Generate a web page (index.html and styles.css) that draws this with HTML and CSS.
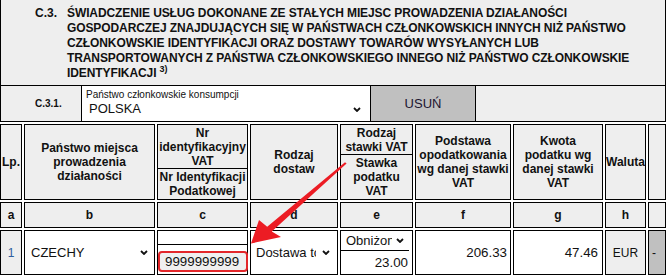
FILE: index.html
```html
<!DOCTYPE html>
<html lang="pl">
<head>
<meta charset="utf-8">
<title>C.3.</title>
<link rel="stylesheet" href="styles.css">
</head>
<body>
<div class="page">
  <div class="section-head">
    <div class="sec-num">C.3.</div>
    <div class="sec-title">
      <div class="tl">ŚWIADCZENIE USŁUG DOKONANE ZE STAŁYCH MIEJSC PROWADZENIA DZIAŁANOŚCI</div>
      <div class="tl">GOSPODARCZEJ ZNAJDUJĄCYCH SIĘ W PAŃSTWACH CZŁONKOWSKICH INNYCH NIŻ PAŃSTWO</div>
      <div class="tl">CZŁONKOWSKIE IDENTYFIKACJI ORAZ DOSTAWY TOWARÓW WYSYŁANYCH LUB</div>
      <div class="tl">TRANSPORTOWANYCH Z PAŃSTWA CZŁONKOWSKIEGO INNEGO NIŻ PAŃSTWO CZŁONKOWSKIE</div>
      <div class="tl">IDENTYFIKACJI <sup class="fn">3)</sup></div>
    </div>
  </div>

  <div class="country-row">
    <div class="country-num">C.3.1.</div>
    <div class="country-field">
      <div class="field-label">Państwo członkowskie konsumpcji</div>
      <div class="select-big">
        <span>POLSKA</span>
        <svg class="chev" width="8" height="5" viewBox="0 0 8 5"><path d="M1 1 L4 4 L7 1" fill="none" stroke="#111" stroke-width="1.8"/></svg>
      </div>
    </div>
    <div class="btn-remove">USUŃ</div>
    <div class="country-rest"></div>
  </div>

  <div class="grid">
    <div class="cell th">Lp.</div>
    <div class="cell th">Państwo miejsca<br>prowadzenia<br>działaności</div>
    <div class="cell th th-split">
      <div class="split-top split-top-c">Nr<br>identyfikacyjny<br>VAT</div>
      <div class="split-bottom">Nr Identyfikacji<br>Podatkowej</div>
    </div>
    <div class="cell th">Rodzaj<br>dostaw</div>
    <div class="cell th th-split">
      <div class="split-top split-top-e">Rodzaj<br>stawki VAT</div>
      <div class="split-bottom">Stawka<br>podatku<br>VAT</div>
    </div>
    <div class="cell th">Podstawa<br>opodatkowania<br>wg danej stawki<br>VAT</div>
    <div class="cell th">Kwota<br>podatku wg<br>danej stawki<br>VAT</div>
    <div class="cell th">Waluta</div>
    <div class="cell th"></div>

    <div class="cell th">a</div>
    <div class="cell th">b</div>
    <div class="cell th">c</div>
    <div class="cell th">d</div>
    <div class="cell th">e</div>
    <div class="cell th">f</div>
    <div class="cell th">g</div>
    <div class="cell th">h</div>
    <div class="cell th"></div>

    <div class="cell td-lp">1</div>
    <div class="cell td td-select">
      <span class="sel-text">CZECHY</span>
      <svg class="chev" width="8" height="5" viewBox="0 0 8 5"><path d="M1 1 L4 4 L7 1" fill="none" stroke="#111" stroke-width="1.8"/></svg>
    </div>
    <div class="cell td td-nip">
      <div class="nip-top"></div>
      <div class="nip-bottom"><div class="hl-input">9999999999</div></div>
    </div>
    <div class="cell td td-kind">
      <span class="sel-clip sel-clip-d">Dostawa towarów</span>
      <svg class="chev" width="8" height="5" viewBox="0 0 8 5"><path d="M1 1 L4 4 L7 1" fill="none" stroke="#111" stroke-width="1.8"/></svg>
    </div>
    <div class="cell td td-rate">
      <div class="rate-top">
        <span class="sel-clip sel-clip-e">Obniżona</span>
        <svg class="chev" width="8" height="5" viewBox="0 0 8 5"><path d="M1 1 L4 4 L7 1" fill="none" stroke="#111" stroke-width="1.8"/></svg>
      </div>
      <div class="rate-bottom">23.00</div>
    </div>
    <div class="cell td td-num td-num-f">206.33</div>
    <div class="cell td td-num">47.46</div>
    <div class="cell td-cur">EUR</div>
    <div class="cell td-del">-</div>
  </div>

  <svg class="arrow" width="666" height="275" viewBox="0 0 666 275">
    <polygon points="345,162.3 267.2,226.8 259,220 251,243.5 281,237 271.8,231.4 346.6,163.6" fill="#ec1c24"/>
  </svg>
</div>
</body>
</html>
```
FILE: styles.css
```css
* {
  box-sizing: border-box;
}

html,
body {
  margin: 0;
  padding: 0;
  background: #fff;
}

body {
  font-family: "Liberation Sans", Arial, sans-serif;
  color: #111;
}

.page {
  position: relative;
  width: 666px;
  height: 275px;
  overflow: hidden;
}

/* ---------- section header ---------- */
.section-head {
  display: flex;
  height: 86px;
  padding-top: 6px;
  background: #eee;
  border-left: 1px solid #000;
  border-right: 1px solid #000;
  border-bottom: 1px solid #000;
  font-size: 12px;
  font-weight: bold;
  line-height: 15px;
}

.sec-num {
  width: 66px;
  padding-left: 34px;
  white-space: nowrap;
}

.sec-title {
  letter-spacing: -0.1px;
}

.tl {
  height: 15px;
  white-space: nowrap;
}

.fn {
  font-size: 9px;
  line-height: 0;
  vertical-align: 5px;
}

/* ---------- country row ---------- */
.country-row {
  display: flex;
  height: 36px;
  border-left: 1px solid #000;
  border-right: 1px solid #000;
  border-bottom: 1px solid #000;
}

.country-num {
  display: flex;
  align-items: center;
  width: 81px;
  padding-left: 34px;
  background: #eee;
  border-right: 1px solid #000;
  font-size: 10px;
  font-weight: bold;
}

.country-field {
  width: 288px;
  padding: 3px 0 0 4px;
  background: #fff;
}

.field-label {
  font-size: 10px;
  line-height: 12px;
  white-space: nowrap;
}

.select-big {
  display: flex;
  align-items: center;
  justify-content: space-between;
  width: 275px;
  padding-left: 3px;
  font-size: 13px;
  line-height: 16px;
}

.btn-remove {
  display: flex;
  align-items: center;
  justify-content: center;
  width: 106px;
  background: #c0c0c0;
  border-left: 1px solid #000;
  border-right: 1px solid #000;
  font-size: 13px;
  color: #1c1530;
}

.country-rest {
  flex: 1;
  background: #eee;
}

.chev {
  display: block;
  flex: none;
}

/* ---------- table grid ---------- */
.grid {
  display: grid;
  grid-template-columns: 22px 131px 91px 88px 73px 96px 90px 41px 18px;
  grid-template-rows: 76px 26px 45px;
  gap: 2px;
  padding-top: 2px;
}

.cell {
  border: 1px solid #000;
  background: #eee;
  min-width: 0;
}

.th {
  display: flex;
  align-items: center;
  justify-content: center;
  text-align: center;
  font-size: 12px;
  font-weight: bold;
  line-height: 14px;
  white-space: nowrap;
}

.th-split {
  flex-direction: column;
  align-items: stretch;
  justify-content: flex-start;
}

.split-top {
  display: flex;
  align-items: center;
  justify-content: center;
  border-bottom: 1px solid #000;
}

.split-top-c {
  height: 44px;
}

.split-top-e {
  height: 30px;
}

.split-bottom {
  flex: 1;
  display: flex;
  align-items: center;
  justify-content: center;
}

.td {
  background: #fff;
}

.td-lp {
  display: flex;
  align-items: center;
  justify-content: center;
  font-size: 12px;
  color: #2f5e9e;
}

.td-select {
  display: flex;
  align-items: center;
  justify-content: space-between;
  padding: 0 6px;
  font-size: 13px;
}

.td-nip {
  display: flex;
  flex-direction: column;
}

.nip-top {
  height: 14px;
  border-bottom: 1px solid #000;
}

.nip-bottom {
  padding-top: 6px;
}

.hl-input {
  width: 90px;
  height: 21px;
  padding-left: 5px;
  background: #efefef;
  border: 2px solid #e3262a;
  border-radius: 4px;
  font-size: 13.33px;
  line-height: 17px;
}

.td-kind {
  display: flex;
  align-items: center;
  padding-left: 5px;
  font-size: 13px;
}

.sel-clip {
  display: block;
  overflow: hidden;
  white-space: nowrap;
}

.sel-clip-d {
  width: 60px;
  margin-right: 6px;
}

.sel-clip-e {
  width: 46px;
  margin-right: 4px;
}

.td-rate {
  display: flex;
  flex-direction: column;
  font-size: 13.33px;
}

.rate-top {
  display: flex;
  align-items: center;
  height: 20px;
  margin-right: 3px;
  padding-left: 5px;
  border-bottom: 1px solid #000;
  font-size: 13px;
}

.rate-bottom {
  flex: 1;
  display: flex;
  align-items: center;
  justify-content: flex-end;
  padding-right: 4px;
}

.td-num {
  display: flex;
  align-items: center;
  justify-content: flex-end;
  padding-right: 4px;
  font-size: 13.33px;
}

.td-num-f {
  padding-right: 3px;
}

.td-cur {
  display: flex;
  align-items: center;
  justify-content: center;
  font-size: 12px;
}

.td-del {
  display: flex;
  align-items: center;
  padding-left: 3px;
  background: #c0c0c0;
  font-size: 12px;
}

/* ---------- annotation arrow ---------- */
.arrow {
  position: absolute;
  left: 0;
  top: 0;
  pointer-events: none;
}
```
